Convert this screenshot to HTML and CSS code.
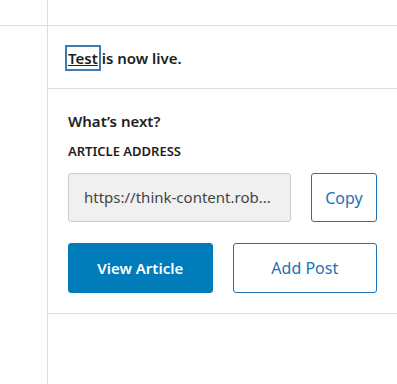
FILE: index.html
```html
<!DOCTYPE html>
<html lang="en">
<head>
  <meta charset="UTF-8" />
  <title>Post published</title>
  <link rel="stylesheet" href="styles.css">
</head>
<body>
  <!-- top strip -->
  <div class="top">
    <div class="gutter"></div>
    <div class="top-main"></div>
  </div>

  <div class="layout">
    <div class="gutter"></div>

    <div class="panel">
      <div class="notice">
        <a class="post-link" href="#">Test</a> is now live.
      </div>

      <div class="next">
        <h2 class="next-title">What’s next?</h2>
        <label class="field-label">ARTICLE ADDRESS</label>
        <div class="address-row">
          <div class="address">https://think-content.rob...</div>
          <button class="btn btn-outline btn-copy">Copy</button>
        </div>
        <div class="actions">
          <button class="btn btn-primary">View Article</button>
          <button class="btn btn-outline">Add Post</button>
        </div>
      </div>
    </div>
  </div>
</body>
</html>
```

FILE: styles.css
```css
/* page */
body {
  margin: 0;
  background: #fff;
  font-family: "Noto Sans", "Open Sans", sans-serif;
  color: #1e1e1e;
}

.top {
  display: flex;
  height: 25px;
  border-bottom: 1px solid #ddd;
}
.gutter {
  width: 47px;
  flex: none;
  border-right: 1px solid #ddd;
}
.top-main {
  flex: 1;
}

.layout {
  display: flex;
  min-height: 358px;
}
.panel {
  flex: 1;
}

/* published notice */
.notice {
  height: 63px;
  box-sizing: border-box;
  padding: 21px 20px 0;
  border-bottom: 1px solid #ddd;
  font-size: 15px;
  font-weight: 600;
  line-height: 22px;
}
.post-link {
  color: #1e1e1e;
  text-decoration: underline;
  outline: 2px solid #3d7bb0;
  outline-offset: 1px;
}

/* what's next */
.next {
  padding: 22px 20px 20px;
  border-bottom: 1px solid #ddd;
}
.next-title {
  margin: 0;
  font-size: 15px;
  font-weight: 600;
  line-height: 20px;
}
.field-label {
  display: block;
  margin-top: 12px;
  font-size: 13px;
  font-weight: 600;
  line-height: 16px;
}

.address-row {
  display: flex;
  gap: 20px;
  margin-top: 14px;
}
.address {
  flex: 1;
  height: 49px;
  box-sizing: border-box;
  padding: 0 15px;
  background: #f0f0f0;
  border: 1px solid #ccc;
  border-radius: 3px;
  font-size: 15px;
  line-height: 47px;
  color: #444;
  white-space: nowrap;
  overflow: hidden;
}

.btn {
  height: 49px;
  box-sizing: border-box;
  border-radius: 3px;
  font-family: inherit;
  font-size: 16px;
  cursor: pointer;
}
.btn-outline {
  background: #fff;
  border: 1px solid #2271b1;
  color: #2271b1;
}
.btn-copy {
  width: 66px;
  padding: 0;
}
.btn-primary {
  background: #007cba;
  border: 1px solid #007cba;
  color: #fff;
  font-size: 15px;
  font-weight: 600;
}

.actions {
  display: grid;
  grid-template-columns: 1fr 1fr;
  gap: 20px;
  margin-top: 21px;
}
.actions .btn {
  height: 50px;
}
```
